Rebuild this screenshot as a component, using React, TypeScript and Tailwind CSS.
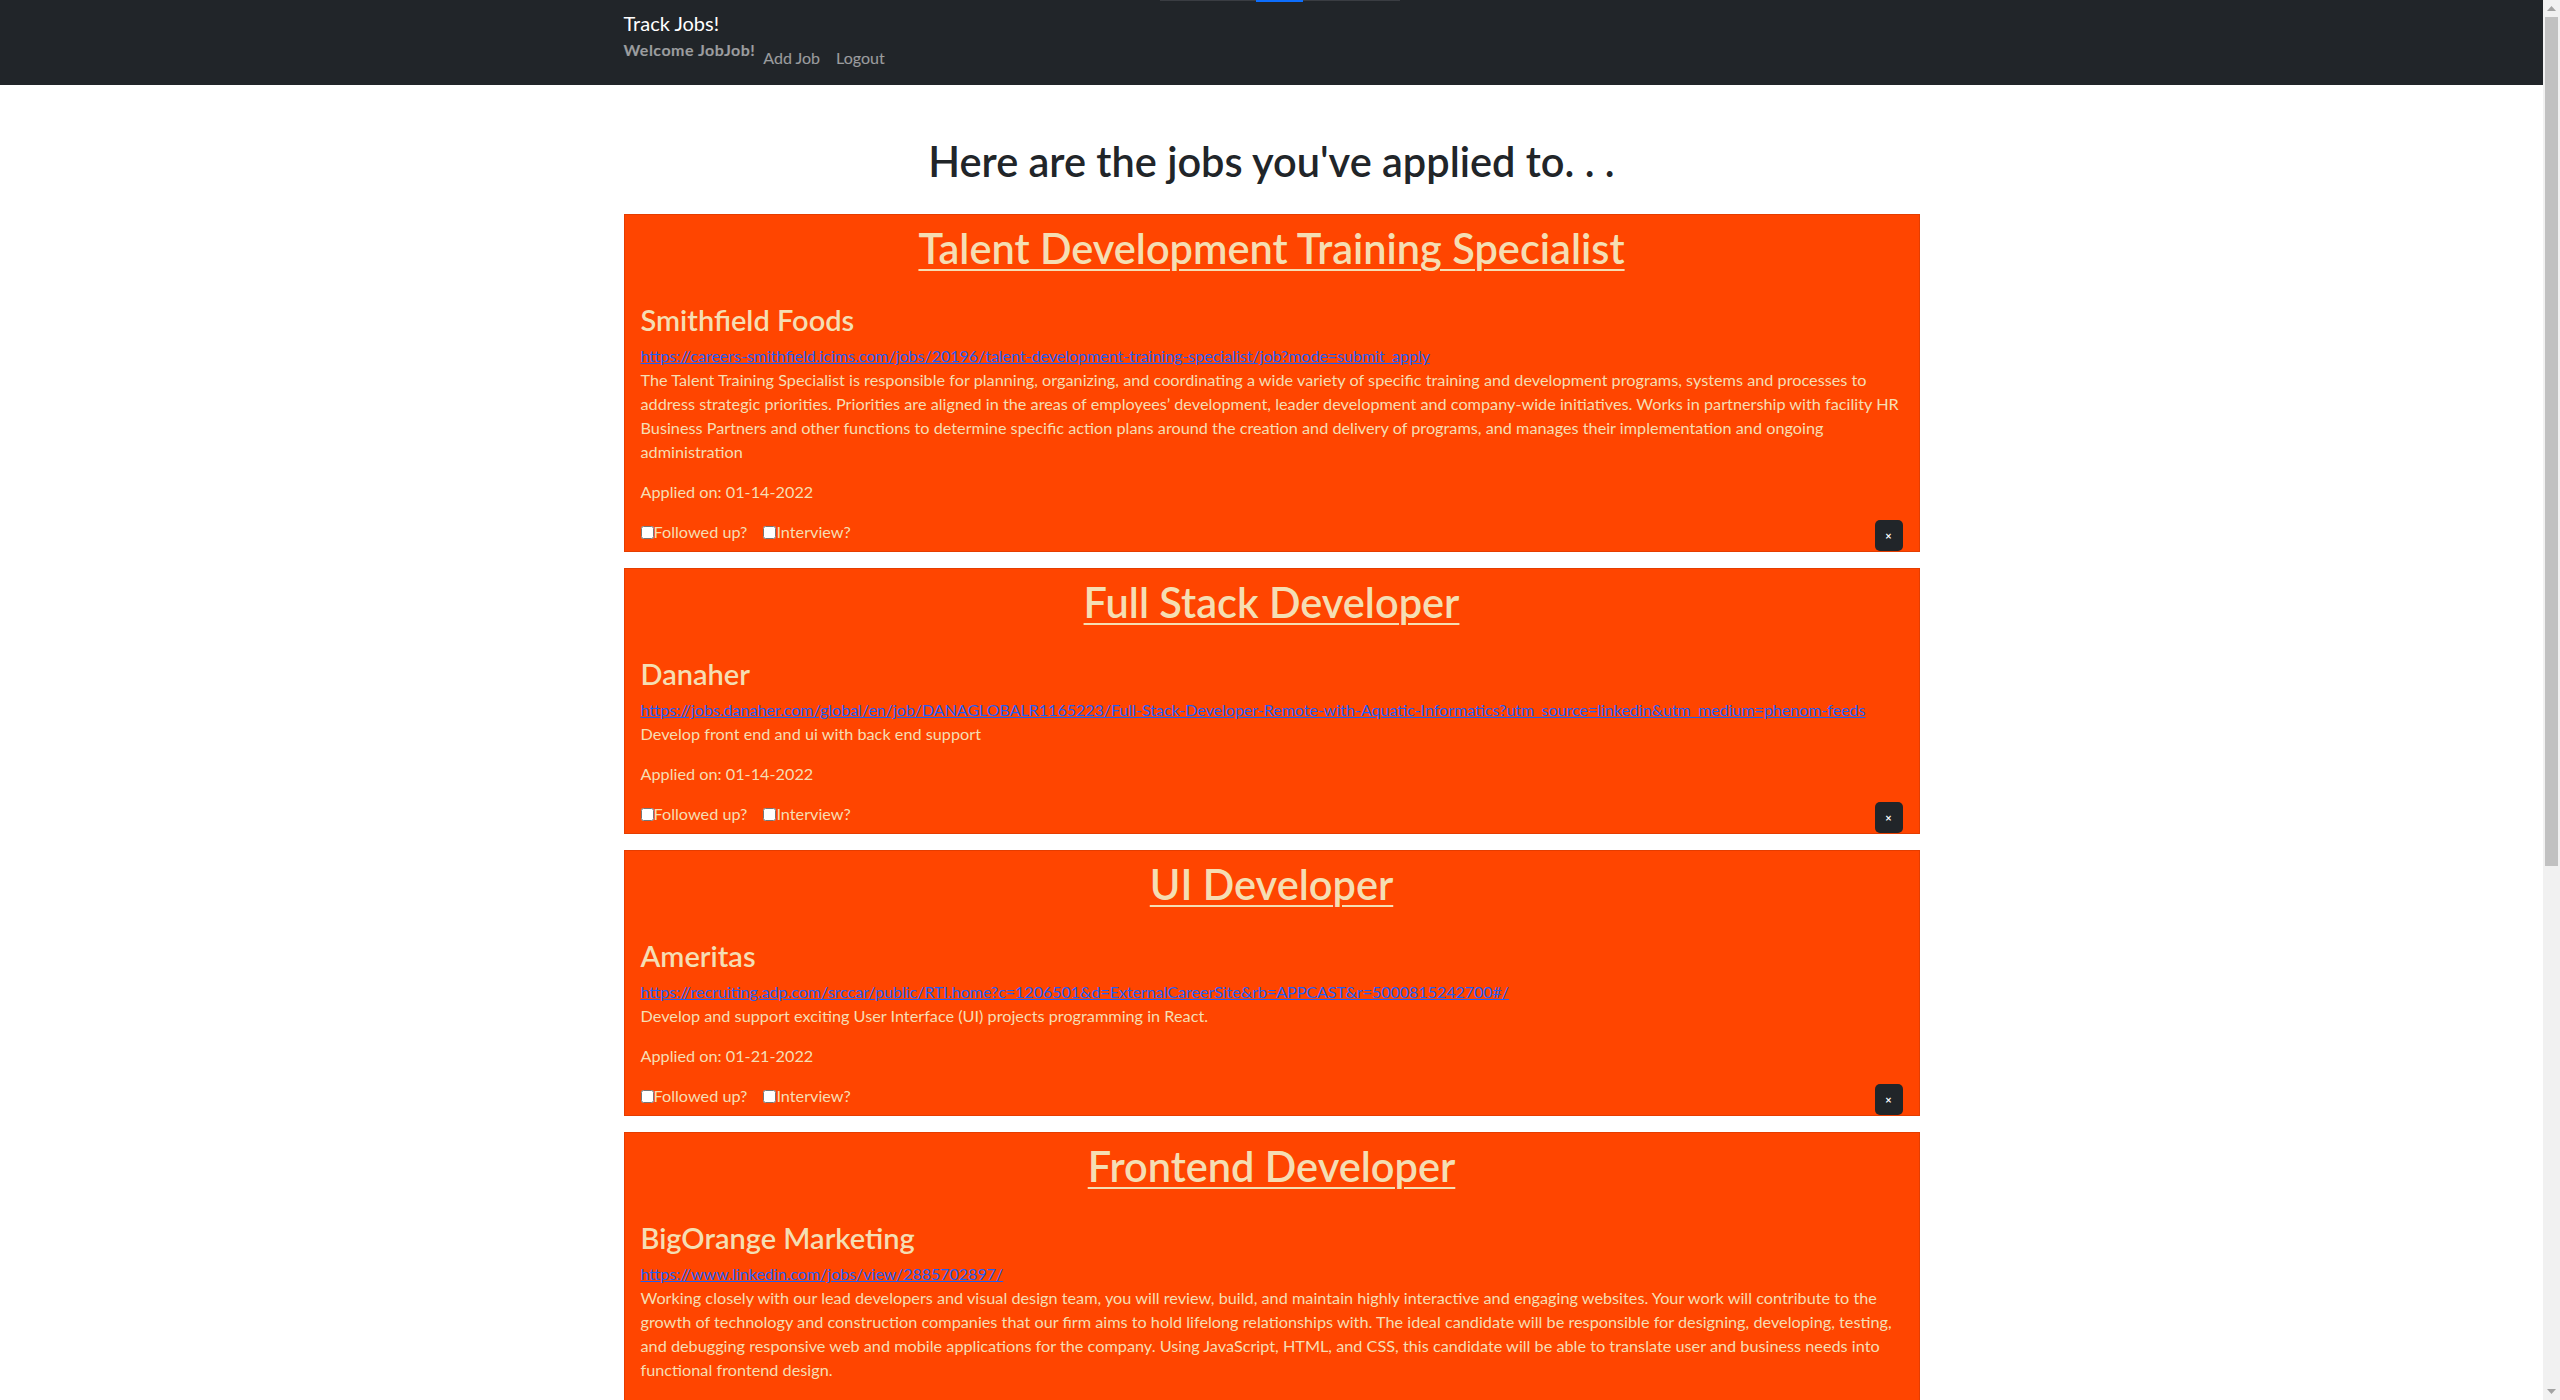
import React from 'react';

type Job = {
  title: string;
  company: string;
  link: string;
  description: string;
  applied: string;
};

const jobs: Job[] = [
  {
    title: 'Talent Development Training Specialist',
    company: 'Smithfield Foods',
    link: 'https://careers-smithfield.icims.com/jobs/20196/talent-development-training-specialist/job?mode=submit_apply',
    description:
      'The Talent Training Specialist is responsible for planning, organizing, and coordinating a wide variety of specific training and development programs, systems and processes to address strategic priorities. Priorities are aligned in the areas of employees’ development, leader development and company-wide initiatives. Works in partnership with facility HR Business Partners and other functions to determine specific action plans around the creation and delivery of programs, and manages their implementation and ongoing administration',
    applied: '01-14-2022',
  },
  {
    title: 'Full Stack Developer',
    company: 'Danaher',
    link: 'https://jobs.danaher.com/global/en/job/DANAGLOBALR1165223/Full-Stack-Developer-Remote-with-Aquatic-Informatics?utm_source=linkedin&utm_medium=phenom-feeds',
    description: 'Develop front end and ui with back end support',
    applied: '01-14-2022',
  },
  {
    title: 'UI Developer',
    company: 'Ameritas',
    link: 'https://recruiting.adp.com/srccar/public/RTI.home?c=1206501&d=ExternalCareerSite&rb=APPCAST&r=5000815242700#/',
    description: 'Develop and support exciting User Interface (UI) projects programming in React.',
    applied: '01-21-2022',
  },
  {
    title: 'Frontend Developer',
    company: 'BigOrange Marketing',
    link: 'https://www.linkedin.com/jobs/view/2885702897/',
    description:
      'Working closely with our lead developers and visual design team, you will review, build, and maintain highly interactive and engaging websites. Your work will contribute to the growth of technology and construction companies that our firm aims to hold lifelong relationships with. The ideal candidate will be responsible for designing, developing, testing, and debugging responsive web and mobile applications for the company. Using JavaScript, HTML, and CSS, this candidate will be able to translate user and business needs into functional frontend design.',
    applied: '01-21-2022',
  },
];

const JobCard = ({ job }: { job: Job }) => (
  <div className="bg-[#ff4500] border border-black/10 px-4 pt-[9px]">
    <h1 className="text-center text-[41.5px] leading-[48px] font-semibold text-[#f5deb3] underline decoration-[2px] underline-offset-[5px] mb-[31px]">
      {job.title}
    </h1>
    <h3 className="text-[29px] leading-[34px] font-semibold text-[#f5deb3] mb-[7px]">{job.company}</h3>
    <a href="#" className="block text-[#1f5ef5] underline text-[16px] leading-6 whitespace-nowrap">
      {job.link}
    </a>
    <p className="text-[#f5deb3] text-[16.25px] leading-6 mb-4">{job.description}</p>
    <p className="text-[#f5deb3] text-[16.25px] leading-6 mb-4">Applied on: {job.applied}</p>
    <div className="flex items-start justify-between h-[31px]">
      <div className="flex items-center gap-4 text-[#f5deb3] text-[16.25px] leading-6">
        <label className="flex items-center">
          <input type="checkbox" className="w-[13px] h-[13px] m-0 accent-white" />
          <span>Followed up?</span>
        </label>
        <label className="flex items-center">
          <input type="checkbox" className="w-[13px] h-[13px] m-0 accent-white" />
          <span>Interview?</span>
        </label>
      </div>
      <button className="w-[28px] h-[31px] bg-[#212529] rounded-[5px] text-white text-[11px] font-bold leading-none">×</button>
    </div>
  </div>
);

const Scrollbar = () => (
  <div className="w-[17px] h-full bg-[#f1f1f1] flex flex-col items-center shrink-0">
    <div className="h-[17px] flex items-center justify-center">
      <svg width="9" height="5" viewBox="0 0 9 5">
        <polygon points="4.5,0 9,5 0,5" fill="#a3a3a3" />
      </svg>
    </div>
    <div className="w-[13px] h-[849px] bg-[#c1c1c1]" />
    <div className="flex-1" />
    <div className="h-[17px] flex items-center justify-center">
      <svg width="9" height="5" viewBox="0 0 9 5">
        <polygon points="0,0 9,0 4.5,5" fill="#a3a3a3" />
      </svg>
    </div>
  </div>
);

export default function App() {
  return (
    <div className="relative flex h-screen overflow-hidden bg-white text-[#212529] font-['Lato',sans-serif] text-[16px]">
      <div className="absolute top-0 left-1/2 -translate-x-1/2 w-[240px] h-px bg-[#3a3d42] flex">
        <div className="ml-[96px] w-[47px] h-[2px] bg-[#0d6efd]" />
      </div>

      <div className="flex-1 min-w-0 overflow-hidden">
        <nav className="bg-[#212529] h-[85px]">
          <div className="w-[1320px] mx-auto px-3 pt-2">
            <div className="text-[20px] leading-[30px] text-white">Track Jobs!</div>
            <div className="flex items-start">
              <span className="font-bold leading-6 tracking-[0.5px] text-white/55">Welcome JobJob!</span>
              <a href="#" className="pt-2 px-2 leading-6 text-white/55">Add Job</a>
              <a href="#" className="pt-2 px-2 leading-6 text-white/55">Logout</a>
            </div>
          </div>
        </nav>

        <div className="w-[1320px] mx-auto px-3 pb-6">
          <h1 className="text-center text-[41.5px] leading-[48px] font-semibold mt-[52px] mb-[29px]">
            Here are the jobs you've applied to. . .
          </h1>
          <div className="flex flex-col gap-4">
            {jobs.map((job, i) => (
              <JobCard key={i} job={job} />
            ))}
          </div>
        </div>
      </div>

      <Scrollbar />
    </div>
  );
}
